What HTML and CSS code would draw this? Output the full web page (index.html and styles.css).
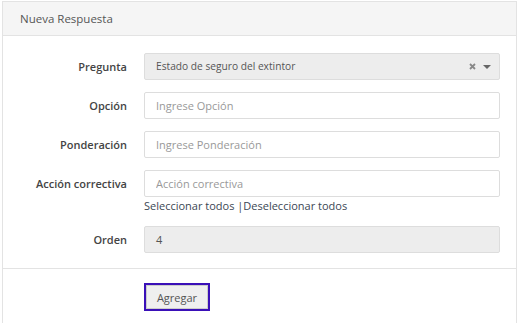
FILE: index.html
```html
<!DOCTYPE html>
<html>
<head>
<meta charset="utf-8">
<link rel="stylesheet" href="styles.css">
</head>
<body>
<div class="panel">
  <div class="panel-heading">Nueva Respuesta</div>
  <div class="panel-body">
    <div class="row">
      <label class="lbl">Pregunta</label>
      <div class="ctl">
        <div class="select">
          <span class="sel-text">Estado de seguro del extintor</span>
          <span class="sel-icons">
            <svg class="x" width="7" height="7" viewBox="0 0 7 7"><path d="M1 1L6 6M6 1L1 6" stroke="#888" stroke-width="1.8"/></svg>
            <svg class="caret" width="8" height="4" viewBox="0 0 8 4"><path d="M0 0H8L4 4Z" fill="#666"/></svg>
          </span>
        </div>
      </div>
    </div>
    <div class="row">
      <label class="lbl">Opción</label>
      <div class="ctl"><input class="input" placeholder="Ingrese Opción"></div>
    </div>
    <div class="row">
      <label class="lbl">Ponderación</label>
      <div class="ctl"><input class="input" placeholder="Ingrese Ponderación"></div>
    </div>
    <div class="row row-tight">
      <label class="lbl">Acción correctiva</label>
      <div class="ctl">
        <input class="input" placeholder="Acción correctiva">
        <div class="links">Seleccionar todos |Deseleccionar todos</div>
      </div>
    </div>
    <div class="row">
      <label class="lbl">Orden</label>
      <div class="ctl"><div class="input readonly">4</div></div>
    </div>
  </div>
  <div class="panel-footer">
    <button class="btn">Agregar</button>
  </div>
</div>
</body>
</html>
```
FILE: styles.css
```css
* { box-sizing: border-box; }
html, body { margin: 0; padding: 0; background: #fff; }
body {
  font-family: "Open Sans", "Noto Sans", sans-serif;
  font-size: 11px;
  color: #555;
  padding: 1px 2px 0 2px;
}
.panel {
  border: 1px solid #e3e3e3;
  border-bottom: none;
  height: 322px;
}
.panel-heading {
  background: #f5f5f5;
  border-bottom: 1px solid #e3e3e3;
  height: 34px;
  padding: 0 17px;
  line-height: 33px;
  font-size: 11.5px;
  color: #555;
}
.panel-body {
  padding: 17px 16px 0 0;
}
.row {
  display: flex;
  align-items: flex-start;
  margin-bottom: 12px;
}
.row-tight { margin-bottom: 13px; }
.lbl {
  width: 124px;
  flex: none;
  text-align: right;
  font-weight: 600;
  font-size: 11px;
  color: #444;
  line-height: 27px;
}
.ctl {
  margin-left: 17px;
  flex: 1;
}
.select, .input {
  display: block;
  width: 100%;
  height: 27px;
  border: 1px solid #ddd;
  border-radius: 2px;
  font-family: inherit;
  font-size: 11px;
  padding: 0 11px;
  color: #555;
  background: #fff;
  line-height: 25px;
  outline: none;
}
.input::placeholder { color: #999; }
.select {
  background: #ededed;
  display: flex;
  align-items: center;
  justify-content: space-between;
  padding: 0 8px 0 11px;
}
.sel-text { font-size: 10.2px; }
.sel-icons { display: flex; align-items: center; gap: 7px; }
.readonly { background: #ededed; }
.links {
  color: #3b4754;
  font-size: 11px;
  margin-top: 2px;
  line-height: 14px;
}
.panel-footer {
  border-top: 1px solid #e3e3e3;
  margin-top: 15px;
  padding: 14px 0 0 140px;
}
.btn {
  font-family: inherit;
  font-size: 11px;
  color: #555;
  background: #efefef;
  border: 1px solid #ccc;
  outline: 2px solid #3a10b8;
  outline-offset: 0;
  height: 24px;
  width: 62px;
  padding: 0;
  margin: 2px 0 0 3px;
}
```
